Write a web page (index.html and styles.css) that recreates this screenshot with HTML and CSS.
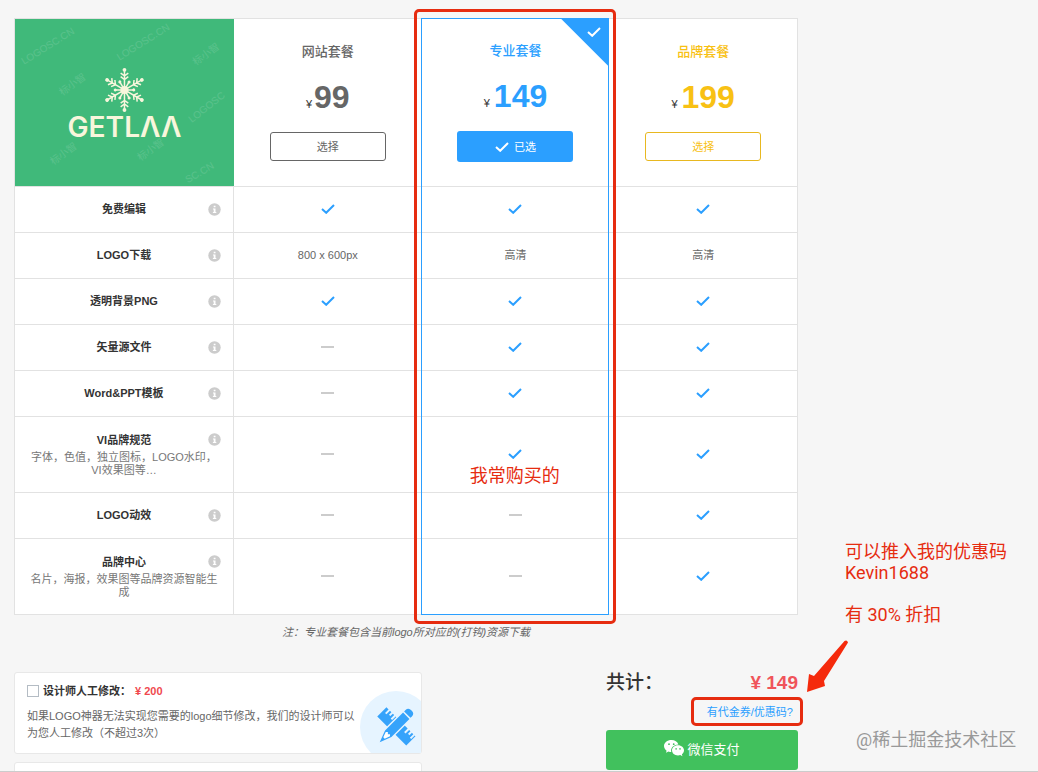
FILE: index.html
```html
<!DOCTYPE html>
<html lang="zh-CN">

<head>
    <meta charset="UTF-8">
    <meta name="viewport" content="width=device-width, initial-scale=1">
    <title>选择套餐</title>
    <link rel="stylesheet" href="styles.css">
</head>

<body>
    <!-- shared icons -->
    <svg class="sprite" aria-hidden="true">
        <symbol id="check" viewBox="0 0 14 10">
            <path d="M1 5 L5.200 8.800 L13 1" fill="none" stroke="currentColor" stroke-width="2" />
        </symbol>
        <symbol id="info" viewBox="0 0 13 13">
            <circle cx="6.500" cy="6.500" r="6.200" fill="#ccc" />
            <path d="M5.700 2.800h1.800v1.500h-1.800zM5 5.400h2.500v3.500h.8v1.100h-3.400v-1.100h.8v-2.400h-.7z" fill="#fff" />
        </symbol>
        <symbol id="arm" viewBox="-24 -24 48 48" overflow="visible">
            <g fill="none" stroke="#f8f6dc" stroke-width="1.500">
                <path d="M0 0V-19M-3.800 -16.800L0 -14L3.800 -16.800M-3.800 -13.200L0 -10.400L3.800 -13.200" />
                <path d="M0 0L4.300 -7.500" />
            </g>
            <circle cy="-20" r="1.900" fill="#f8f6dc" />
            <circle cx="4.600" cy="-8" r="1.500" fill="#f8f6dc" />
        </symbol>
    </svg>

    <div class="page">
        <main>
            <div class="plans">
                <table>
                    <thead>
                        <tr>
                            <td class="logo">
                                <svg viewBox="0 0 218 167" preserveAspectRatio="xMidYMid slice" role="img" aria-label="GETLAA">
                                    <g class="stamp">
                                        <text transform="translate(9 46) rotate(-32)">LOGOSC.CN</text>
                                        <text transform="translate(104 42) rotate(-32)">LOGOSC.CN</text>
                                        <text transform="translate(180 47) rotate(-36)">标小智</text>
                                        <text transform="translate(47 77) rotate(-36)">标小智</text>
                                        <text transform="translate(176 104) rotate(-38)">LOGOSC</text>
                                        <text transform="translate(38 146) rotate(-36)">标小智</text>
                                        <text transform="translate(125 142) rotate(-36)">标小智</text>
                                        <text transform="translate(172 164) rotate(-30)">SC.CN</text>
                                    </g>
                                    <g transform="translate(109 71)">
                                        <circle r="4" fill="#f8f6dc" />
                                        <use href="#arm" x="-24" y="-24" width="48" height="48" />
                                        <use href="#arm" x="-24" y="-24" width="48" height="48" transform="rotate(60)" />
                                        <use href="#arm" x="-24" y="-24" width="48" height="48" transform="rotate(120)" />
                                        <use href="#arm" x="-24" y="-24" width="48" height="48" transform="rotate(180)" />
                                        <use href="#arm" x="-24" y="-24" width="48" height="48" transform="rotate(240)" />
                                        <use href="#arm" x="-24" y="-24" width="48" height="48" transform="rotate(300)" />
                                    </g>
                                    <text class="brand" x="109" y="118" text-anchor="middle">GETLΛΛ</text>
                                </svg>
                            </td>
                            <th scope="col" class="plan web">
                                <h2>网站套餐</h2>
                                <p class="price"><small>¥</small>99</p>
                                <button type="button">选择</button>
                            </th>
                            <th scope="col" class="plan pro">
                                <span class="corner"><svg class="check"><use href="#check" /></svg></span>
                                <h2>专业套餐</h2>
                                <p class="price"><small>¥</small>149</p>
                                <button type="button"><svg class="check"><use href="#check" /></svg>已选</button>
                            </th>
                            <th scope="col" class="plan brand-plan">
                                <h2>品牌套餐</h2>
                                <p class="price"><small>¥</small>199</p>
                                <button type="button">选择</button>
                            </th>
                        </tr>
                    </thead>
                    <tbody>
                        <tr>
                            <th scope="row"><div class="feature"><span>免费编辑</span><svg><use href="#info" /></svg></div></th>
                            <td><svg class="check"><use href="#check" /></svg></td>
                            <td><svg class="check"><use href="#check" /></svg></td>
                            <td><svg class="check"><use href="#check" /></svg></td>
                        </tr>
                        <tr>
                            <th scope="row"><div class="feature"><span>LOGO下载</span><svg><use href="#info" /></svg></div></th>
                            <td>800 x 600px</td>
                            <td>高清</td>
                            <td>高清</td>
                        </tr>
                        <tr>
                            <th scope="row"><div class="feature"><span>透明背景PNG</span><svg><use href="#info" /></svg></div></th>
                            <td><svg class="check"><use href="#check" /></svg></td>
                            <td><svg class="check"><use href="#check" /></svg></td>
                            <td><svg class="check"><use href="#check" /></svg></td>
                        </tr>
                        <tr>
                            <th scope="row"><div class="feature"><span>矢量源文件</span><svg><use href="#info" /></svg></div></th>
                            <td><i class="none"></i></td>
                            <td><svg class="check"><use href="#check" /></svg></td>
                            <td><svg class="check"><use href="#check" /></svg></td>
                        </tr>
                        <tr>
                            <th scope="row"><div class="feature"><span>Word&amp;PPT模板</span><svg><use href="#info" /></svg></div></th>
                            <td><i class="none"></i></td>
                            <td><svg class="check"><use href="#check" /></svg></td>
                            <td><svg class="check"><use href="#check" /></svg></td>
                        </tr>
                        <tr class="tall">
                            <th scope="row">
                                <div class="feature"><span>VI品牌规范</span><svg><use href="#info" /></svg></div>
                                <p>字体，色值，独立图标，LOGO水印，VI效果图等…</p>
                            </th>
                            <td><i class="none"></i></td>
                            <td><svg class="check"><use href="#check" /></svg></td>
                            <td><svg class="check"><use href="#check" /></svg></td>
                        </tr>
                        <tr>
                            <th scope="row"><div class="feature"><span>LOGO动效</span><svg><use href="#info" /></svg></div></th>
                            <td><i class="none"></i></td>
                            <td><i class="none"></i></td>
                            <td><svg class="check"><use href="#check" /></svg></td>
                        </tr>
                        <tr class="tall">
                            <th scope="row">
                                <div class="feature"><span>品牌中心</span><svg><use href="#info" /></svg></div>
                                <p>名片，海报，效果图等品牌资源智能生成</p>
                            </th>
                            <td><i class="none"></i></td>
                            <td><i class="none"></i></td>
                            <td><svg class="check"><use href="#check" /></svg></td>
                        </tr>
                    </tbody>
                </table>
                <div class="picked"><span>我常购买的</span></div>
            </div>

            <p class="note">注：专业套餐包含当前logo所对应的(打钩)资源下载</p>

            <div class="order">
                <div class="extras">
                    <section class="card">
                        <label><input type="checkbox">设计师人工修改：<b>¥ 200</b></label>
                        <p>如果LOGO神器无法实现您需要的logo细节修改，我们的设计师可以为您人工修改（不超过3次）</p>
                        <svg class="tools" viewBox="0 0 61 63" aria-hidden="true">
                            <circle cx="36" cy="37" r="36" fill="#e6f4ff" />
                            <g transform="translate(36 36) rotate(45)" fill="#36a3fb">
                                <path d="M-20 -6.500h3v5h2v-5h2v3.500h2v-3.500h2v5h2v-5h17v5h2v-5h2v3.500h2v-3.500h2v5h2v-5h1v13h-41z" />
                                <path d="M-6 -24H6V15L0 25L-6 15Z" fill="#e6f4ff" />
                                <path d="M-4.500 -16V-18Q-4.500 -22 0 -22T4.500 -18V-16ZM-4.500 -14.500H4.500V11L0 23L-4.500 11Z" />
                                <path d="M-3 11.500L-1.500 10L0 11.500L1.500 10L3 11.500L1 17H-1Z" fill="#fff" />
                            </g>
                        </svg>
                    </section>
                    <section class="card"></section>
                </div>

                <div class="checkout">
                    <p class="total"><span>共计：</span><b>¥ 149</b></p>
                    <a href="#">有代金券/优惠码?</a>
                    <button type="button" class="pay">
                        <svg viewBox="0 0 20 17" aria-hidden="true">
                            <path d="M7.500 0C3.200 0 0 2.700 0 6.100C0 8 1 9.600 2.600 10.700L2 12.800L4.500 11.500Q6 12 7.300 12C6.200 8 9.500 4.500 14.400 4.400C13.500 1.800 10.800 0 7.500 0Z" fill="#fff" />
                            <path d="M14 5.200C10.500 5.200 8 7.600 8 10.300C8 13.200 10.500 15.500 14 15.500Q15.200 15.500 16.300 15.100L18.400 16.300L17.900 14.300C19.200 13.300 20 12 20 10.300C20 7.600 17.500 5.200 14 5.200Z" fill="#fff" />
                            <g fill="#41c15d">
                                <circle cx="5" cy="4.200" r=".9" />
                                <circle cx="9.700" cy="4.200" r=".9" />
                                <circle cx="12.100" cy="8.900" r=".8" />
                                <circle cx="16" cy="8.900" r=".8" />
                            </g>
                        </svg>微信支付
                    </button>
                </div>
            </div>
        </main>

        <aside>
            <p>可以推入我的优惠码<br>Kevin1688</p>
            <p>有 30% 折扣</p>
            <svg class="arrow" viewBox="0 0 44 52" aria-hidden="true">
                <path d="M38.500 1Q41 -0.500 42 2.500L18 41L19 46L1 52L3 34L8 36Z" fill="#f52a0c" />
            </svg>
            <p class="watermark">@稀土掘金技术社区</p>
        </aside>
    </div>
</body>

</html>
```

FILE: styles.css
```css
* {
    margin: 0;
    padding: 0;
    box-sizing: border-box;
}

body {
    font-family: "Liberation Sans", "Noto Sans CJK SC", sans-serif;
    font-size: 11px;
    color: #666;
    background: #f6f6f6;
}

button {
    font: inherit;
    cursor: pointer;
}

.sprite {
    position: absolute;
    width: 0;
    height: 0;
}

.page {
    display: flex;
    height: 100vh;
    overflow: hidden;
    padding: 18px 0 0 14px;
    border-bottom: 1px solid #ccc;
}

main {
    flex: 1;
}

/* plans */

.plans {
    position: relative;
}

table {
    width: 100%;
    table-layout: fixed;
    border-spacing: 0;
    border: 1px solid #e2e2e2;
    border-bottom: 0;
    background: #fff;
}

td,
th {
    height: 46px;
    padding-bottom: 1px;
    border-bottom: 1px solid #e2e2e2;
    text-align: center;
    vertical-align: middle;
    line-height: 16px;
}

.tall th {
    height: 76px;
}

tbody th {
    border-right: 1px solid #e2e2e2;
    color: #333;
}

.logo {
    width: 28%;
    height: 168px;
    padding: 0;
    background: #40b97a;
}

.logo svg {
    display: block;
    width: 100%;
    height: 167px;
}

.stamp {
    font-size: 10px;
    fill: #fff;
    opacity: .13;
}

.brand {
    font-family: Inter, sans-serif;
    font-size: 28px;
    font-weight: 600;
    fill: #f8f6dc;
}

.plan {
    position: relative;
    padding-bottom: 2px;
    color: #666;
}

.plan h2 {
    font-size: 13px;
    font-weight: 500;
    line-height: 20px;
}

.price {
    margin: 17px 0;
    font-size: 32px;
    line-height: 36px;
}

.price small {
    margin-right: 4px;
    font-size: 11px;
    font-weight: 400;
    line-height: 11px;
    color: #333;
}

.web small {
    margin-right: 2px;
}

.plan button {
    display: block;
    width: 116px;
    height: 29px;
    margin: 0 auto;
    border: 1px solid #666;
    border-radius: 3px;
    background: #fff;
    font-weight: 400;
    color: inherit;
}

.pro {
    color: #2b9fff;
}

.pro button {
    display: flex;
    align-items: center;
    justify-content: center;
    gap: 5px;
    height: 31px;
    border: 0;
    background: #2b9fff;
    color: #fff;
}

.corner {
    position: absolute;
    top: 0;
    right: 0;
    width: 48px;
    height: 48px;
    padding: 8px 8px 0 26px;
    background: #2b9fff;
    clip-path: polygon(0 0, 100% 0, 100% 100%);
}

.brand-plan {
    color: #f8c114;
}

.brand-plan button {
    border-color: #e8b820;
}

.check {
    display: block;
    width: 14px;
    height: 10px;
    margin: 0 auto;
    color: #2b9fff;
}

.pro .check {
    margin: 0;
    color: #fff;
}

.none {
    display: block;
    width: 13px;
    height: 2px;
    margin: 0 auto;
    background: #ccc;
}

.feature {
    display: grid;
    grid-template-columns: 13px 1fr 13px;
    align-items: center;
    padding: 0 12px;
}

.feature span {
    grid-column: 2;
}

.feature svg {
    width: 13px;
    height: 13px;
}

tbody th p {
    padding: 3px 14px 0;
    font-weight: 400;
    line-height: 13px;
    color: #777;
}

/* marks around the chosen plan */

.picked {
    position: absolute;
    top: 0;
    bottom: 0;
    left: calc(52% - 1px);
    width: 24%;
    border: 1px solid #2b9fff;
    pointer-events: none;
}

.picked::before {
    content: "";
    position: absolute;
    inset: -10px -8px;
    border: 3px solid #e62c10;
    border-radius: 5px;
}

.picked span {
    position: absolute;
    bottom: 126px;
    width: 100%;
    text-align: center;
    font-size: 18px;
    line-height: 24px;
    color: #e62c10;
}

.note {
    margin: 9px 0 32px;
    font-style: italic;
    line-height: 16px;
    text-align: center;
}

/* order */

.order {
    display: flex;
    justify-content: space-between;
}

.extras {
    width: 52%;
}

.card {
    position: relative;
    min-height: 82px;
    margin-bottom: 8px;
    padding: 10px 58px 10px 12px;
    border: 1px solid #e8e8e8;
    border-radius: 3px;
    background: #fff;
}

.card label {
    display: flex;
    align-items: center;
    margin-bottom: 9px;
    font-weight: 700;
    line-height: 16px;
    color: #333;
}

.card input {
    appearance: none;
    width: 12px;
    height: 12px;
    margin-right: 4px;
    border: 1px solid #b4bcc4;
    background: #fff;
}

.card b {
    margin-left: 4px;
    color: #f0484e;
}

.card p {
    line-height: 17px;
}

.tools {
    position: absolute;
    right: 0;
    bottom: 0;
    width: 61px;
    height: 63px;
}

.checkout {
    display: flex;
    flex-direction: column;
    width: 192px;
}

.total {
    display: flex;
    justify-content: space-between;
    font-size: 19px;
    font-weight: 500;
    line-height: 22px;
    color: #333;
}

.total b {
    color: #f0545a;
}

.checkout a {
    position: relative;
    align-self: flex-end;
    margin: 8px 5px;
    line-height: 20px;
    color: #2b9fff;
    text-decoration: none;
}

.checkout a::after {
    content: "";
    position: absolute;
    inset: -5px -10px -4px -16px;
    border: 3px solid #e62c10;
    border-radius: 5px;
}

.pay {
    display: flex;
    align-items: center;
    justify-content: center;
    gap: 3px;
    height: 40px;
    padding-bottom: 4px;
    border: 0;
    border-radius: 3px;
    background: #41c15d;
    font-size: 13px;
    color: #fff;
}

.pay svg {
    width: 20px;
    height: 17px;
}

/* side notes */

aside {
    width: 240px;
    padding: 523px 0 0 8px;
    font-family: Roboto, "Noto Sans CJK SC", sans-serif;
    font-size: 18px;
    line-height: 21px;
    color: #e62c10;
}

aside p {
    margin: 0 0 21px 39px;
}

.arrow {
    display: block;
    width: 44px;
    height: 52px;
    margin-top: -6px;
}

.watermark {
    margin: 36px 0 0 50px;
    line-height: 24px;
    color: #999;
}
```
